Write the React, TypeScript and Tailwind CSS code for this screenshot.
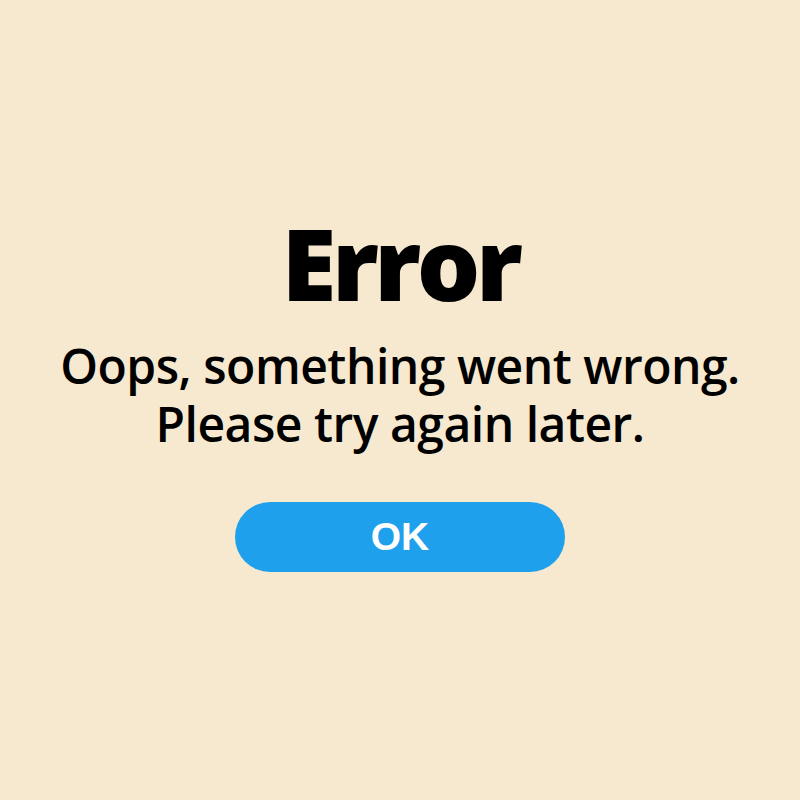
import React from 'react';

const ErrorNotice: React.FC<{ onConfirm?: () => void }> = ({ onConfirm }) => {
    return (
        <div className="flex flex-col items-center pt-[212px]">
            <h1 className="text-[100px] leading-none font-extrabold tracking-[-0.045em] text-black font-['Open_Sans',sans-serif]">
                Error
            </h1>
            <p className="mt-[25px] text-center text-[48px] leading-[58px] font-semibold tracking-[-0.01em] text-black font-['Open_Sans',sans-serif]">
                Oops, something went wrong.
                <br />
                Please try again later.
            </p>
            <button
                onClick={onConfirm}
                className="mt-[49px] w-[330px] h-[70px] rounded-full bg-[#1ea0ec] text-white text-[39px] font-bold font-['Liberation_Sans',Arial,sans-serif]"
            >
                OK
            </button>
        </div>
    );
};

export default function App() {
    return (
        <div className="w-full min-h-screen bg-[#f6e9cf]">
            <ErrorNotice />
        </div>
    );
}
